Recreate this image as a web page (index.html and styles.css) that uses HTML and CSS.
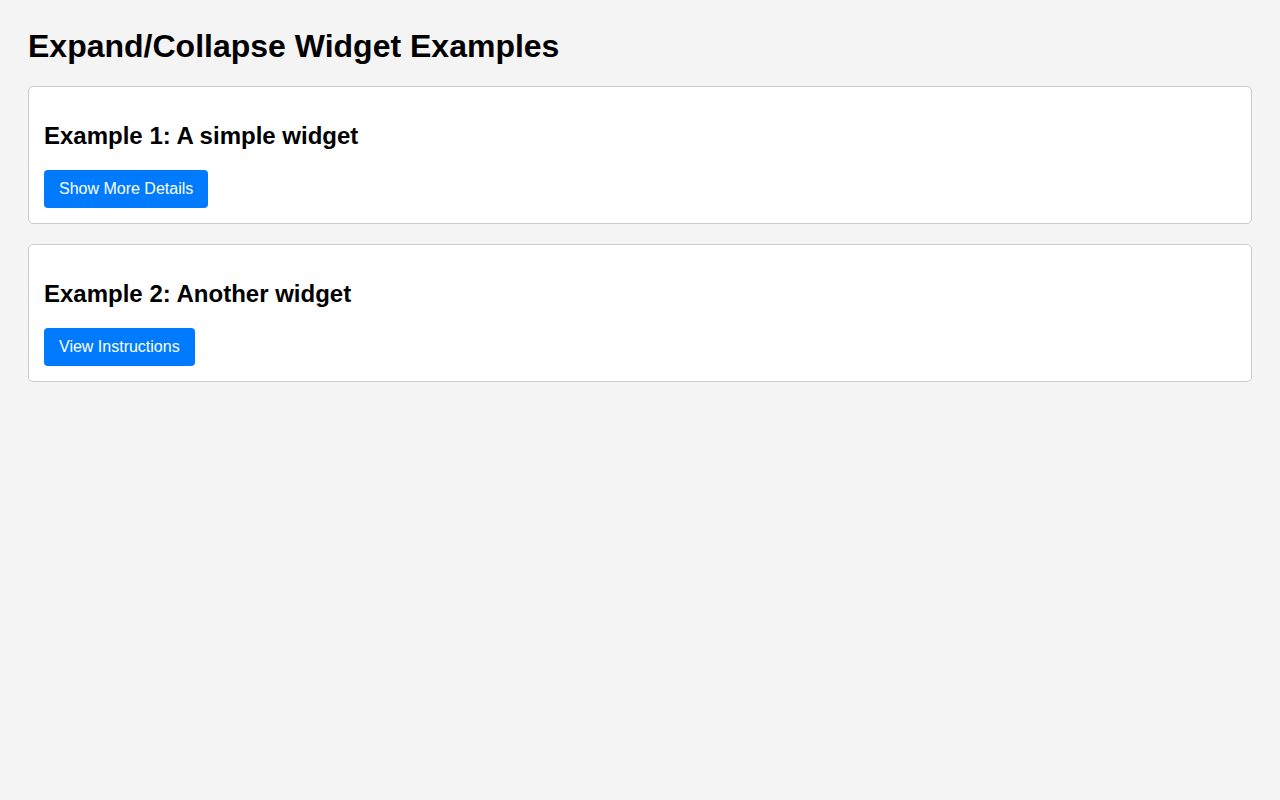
FILE: index.html
```html
<!DOCTYPE html>
<html lang="en">
<head>
    <meta charset="UTF-8">
    <meta name="viewport" content="width=device-width, initial-scale=1.0">
    <title>Expand/Collapse Widget Examples</title>
    <link rel="stylesheet" href="styles.css">
</head>
<body>
    <h1>Expand/Collapse Widget Examples</h1>

    <div class="widget">
        <h2>Example 1: A simple widget</h2>
        <button class="toggle-btn" data-target="details1">Show More Details</button>
        <div class="widget-content" id="details1">
            <p>Here are some more details about this widget.</p>
        </div>
    </div>

    <div class="widget">
        <h2>Example 2: Another widget</h2>
        <button class="toggle-btn" data-target="details2">View Instructions</button>
        <div class="widget-content" id="details2">
            <p>Follow these steps to get started.</p>
        </div>
    </div>

    <script>
        document.querySelectorAll('.toggle-btn').forEach(btn => {
            const label = btn.textContent;
            btn.addEventListener('click', () => {
                const content = document.getElementById(btn.dataset.target);
                const open = content.classList.toggle('open');
                btn.textContent = open ? 'Hide' : label;
            });
        });
    </script>
</body>
</html>
```

FILE: styles.css
```css
body {
    font-family: "Liberation Sans", Arial, sans-serif;
    margin: 0;
    padding: 28px;
    background-color: #f4f4f4;
    color: #000;
}

h1 {
    font-size: 32px;
    margin: 0 0 21.44px;
}

.widget {
    background-color: #fff;
    border: 1px solid #ccc;
    border-radius: 5px;
    padding: 15px;
    margin-bottom: 20px;
}

.widget h2 {
    font-size: 24px;
    margin: 19.92px 0;
}

.toggle-btn {
    display: block;
    font-family: inherit;
    font-size: 16px;
    line-height: 18px;
    padding: 10px 15px;
    background-color: #007bff;
    color: #fff;
    border: none;
    border-radius: 4px;
    cursor: pointer;
}

.toggle-btn:hover {
    background-color: #0069d9;
}

.widget-content {
    display: none;
    margin-top: 10px;
}

.widget-content.open {
    display: block;
}
```
